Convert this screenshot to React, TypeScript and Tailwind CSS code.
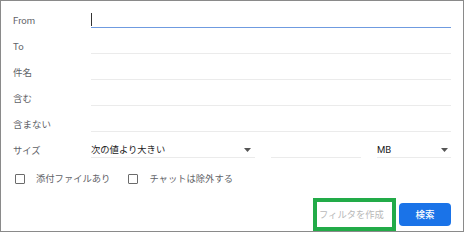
const font = {
  fontFamily: 'Roboto, "Noto Sans CJK JP", sans-serif',
};

const Row = ({ label, first }: { label: string; first?: boolean }) => (
  <div className="flex h-[26px] items-end">
    <div className="w-[78px] pb-[1px] text-[9.5px] leading-[12px] text-[#5f6368]">
      {label}
    </div>
    <div
      className={
        first
          ? "relative h-full flex-1 border-b border-[#6f9be0]"
          : "h-full flex-1 border-b border-[#ebebeb]"
      }
    >
      {first && (
        <div className="absolute bottom-[1px] left-0 h-[13px] w-px bg-[#333]"></div>
      )}
    </div>
  </div>
);

const Caret = () => (
  <svg width="7" height="4" viewBox="0 0 7 4" className="mb-[5px]">
    <path d="M0 0 L7 0 L3.5 4 Z" fill="#555" />
  </svg>
);

const Checkbox = ({ label }: { label: string }) => (
  <div className="flex items-center">
    <div className="h-[10px] w-[10px] rounded-[1px] border border-[#6b6b6b]"></div>
    <span className="ml-[11px] text-[9.3px] leading-[12px] text-[#5f6368]">
      {label}
    </span>
  </div>
);

const App = () => {
  return (
    <div className="h-[233px] w-[465px] bg-white" style={font}>
      <div className="flex h-[232px] w-[464px] flex-col border border-[#8a8a8a] pt-[1px] pl-[12px] pr-[12px]">
        <Row label="From" first />
        <Row label="To" />
        <Row label="件名" />
        <Row label="含む" />
        <Row label="含まない" />

        <div className="flex h-[26px] items-end">
          <div className="w-[78px] pb-[1px] text-[9.3px] leading-[12px] text-[#5f6368]">
            サイズ
          </div>
          <div className="flex h-full w-[164px] items-end justify-between border-b border-[#ebebeb] pr-[4px]">
            <span className="pb-[1px] text-[9.3px] leading-[12px] text-[#222]">
              次の値より大きい
            </span>
            <Caret />
          </div>
          <div className="ml-[16px] h-full w-[90px] border-b border-[#ebebeb]"></div>
          <div className="ml-[16px] flex h-full flex-1 items-end justify-between border-b border-[#ebebeb] pr-[3px]">
            <span className="pb-[1px] text-[9.5px] leading-[12px] text-[#222]">MB</span>
            <Caret />
          </div>
        </div>

        <div className="mt-[15px] flex items-center pl-[2px]">
          <Checkbox label="添付ファイルあり" />
          <div className="ml-[18px]">
            <Checkbox label="チャットは除外する" />
          </div>
        </div>

        <div className="mt-[13px] flex items-center justify-end">
          <div className="flex h-[33px] w-[83px] items-center border-[4px] border-[#22ab48] bg-white pl-[2px]">
            <span className="text-[9.3px] leading-[12px] text-[#b9b9b9]">
              フィルタを作成
            </span>
          </div>
          <button className="ml-[3px] flex h-[23px] w-[52px] items-center justify-center rounded-[4px] bg-[#1a73e8] text-[9.5px] font-medium leading-[12px] text-white">
            検索
          </button>
        </div>
      </div>
    </div>
  );
};

export default App;
